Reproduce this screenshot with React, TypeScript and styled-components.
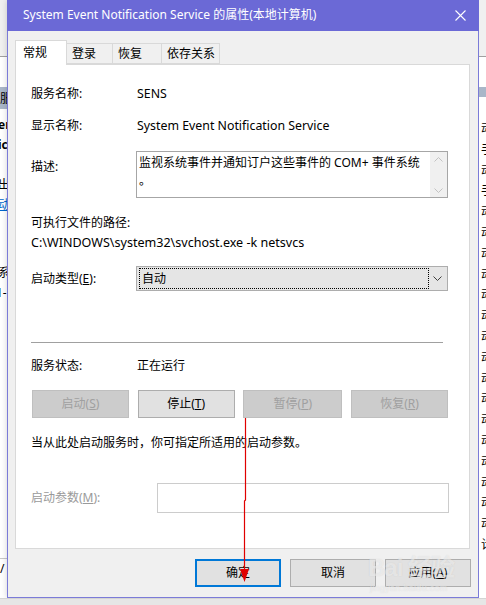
import React from "react";
import styled, { createGlobalStyle } from "styled-components";

const Global = createGlobalStyle`
  html, body { margin: 0; padding: 0; overflow: hidden; background: #ffffff; }
  * { box-sizing: border-box; }
  body { font-family: "Noto Sans", "Noto Sans CJK SC", sans-serif; font-size: 12px; color: #000; }
`;

const FONT = `"Noto Sans", "Noto Sans CJK SC", sans-serif`;

const Root = styled.div`
  position: relative;
  width: 486px;
  height: 605px;
  display: grid;
  grid-template-columns: 7px 472px 7px;
  grid-template-rows: 598px 7px;
  background: #ffffff;
  overflow: hidden;
`;

/* ---------- background windows ---------- */
const Side = styled.div`
  display: flex;
  flex-direction: column;
  overflow: hidden;
  background: #ffffff;
`;
const SideTop = styled.div`
  height: 57px;
  background: #f0f0f0;
  border-bottom: 1px solid #a0a0a0;
  flex: none;
`;
const SideGap = styled.div<{ h: number; bg?: string }>`
  height: ${(p) => p.h}px;
  background: ${(p) => p.bg || "#ffffff"};
  flex: none;
`;
const SideHeader = styled.div<{ h?: number }>`
  height: ${(p) => p.h ?? 22}px;
  background: #a9b6c8;
  flex: none;
  font-family: "Noto Sans CJK SC", sans-serif;
  font-size: 12px;
  line-height: 22px;
  white-space: nowrap;
`;
const SideText = styled.div<{ bold?: boolean; link?: boolean; left?: number }>`
  height: 20px;
  line-height: 20px;
  flex: none;
  white-space: nowrap;
  font-family: ${FONT};
  font-size: 12px;
  font-weight: ${(p) => (p.bold ? 700 : 400)};
  color: ${(p) => (p.link ? "#0066cc" : "#000")};
  text-decoration: ${(p) => (p.link ? "underline" : "none")};
  margin-left: ${(p) => p.left ?? 0}px;
`;
const RightText = styled(SideText)`
  height: 20.8px;
  line-height: 20.8px;
  margin-left: 2px;
`;
const Bottom = styled.div`
  grid-column: 1 / 4;
  background: #e6e6e6;
  border-top: 1px solid #d4d4d4;
`;

/* ---------- dialog ---------- */
const Dialog = styled.div`
  display: flex;
  flex-direction: column;
  background: #f0f0f0;
  border: 1px solid #7b7bd8;
  border-top: none;
  box-shadow: 0 0 6px rgba(0, 0, 0, 0.18);
`;
const TitleBar = styled.div`
  height: 31px;
  flex: none;
  margin: 0 -1px;
  background: #6b69d6;
  color: #ffffff;
  display: flex;
  align-items: center;
  justify-content: space-between;
  padding: 0 13px 0 16px;
  font-family: ${FONT};
  font-size: 12px;
`;
const TitleText = styled.span`
  line-height: 16px;
  margin-top: -1px;
`;
const Body = styled.div`
  display: flex;
  flex-direction: column;
  padding: 9px 7px 0 7px;
  flex: 1;
`;
const TabStrip = styled.div`
  display: flex;
  align-items: flex-end;
  height: 24px;
  position: relative;
  z-index: 2;
`;
const Tab = styled.div<{ active?: boolean; w: number }>`
  width: ${(p) => p.w}px;
  height: ${(p) => (p.active ? 25 : 21)}px;
  margin-bottom: ${(p) => (p.active ? -1 : 0)}px;
  margin-right: -1px;
  background: ${(p) => (p.active ? "#ffffff" : "#f0f0f0")};
  border: 1px solid #d9d9d9;
  border-bottom: ${(p) => (p.active ? "none" : "1px solid #d9d9d9")};
  padding-left: ${(p) => (p.active ? 7 : 5)}px;
  line-height: ${(p) => (p.active ? 23 : 20)}px;
  font-family: ${FONT};
  font-size: 12px;
  white-space: nowrap;
  position: relative;
  z-index: ${(p) => (p.active ? 2 : 1)};
`;
const Panel = styled.div`
  height: 485px;
  background: #ffffff;
  border: 1px solid #d9d9d9;
  margin-right: 1px;
  padding: 0 20px 0 15px;
  display: flex;
  flex-direction: column;
`;
const Row = styled.div<{ mt: number; col?: number; align?: string }>`
  display: grid;
  grid-template-columns: ${(p) => p.col ?? 105}px 1fr;
  align-items: ${(p) => p.align || "center"};
  margin-top: ${(p) => p.mt}px;
`;
const Label = styled.div<{ disabled?: boolean; mt?: number }>`
  line-height: 16px;
  white-space: nowrap;
  color: ${(p) => (p.disabled ? "#9a9a9a" : "#000")};
  margin-top: ${(p) => p.mt ?? 0}px;
`;
const Value = styled.div<{ latin?: boolean }>`
  line-height: 16px;
  padding-left: 1px;
  white-space: nowrap;
  font-size: ${(p) => (p.latin ? 12.35 : 12)}px;
`;
const Line = styled.div<{ mt: number; latin?: boolean }>`
  line-height: 16px;
  margin-top: ${(p) => p.mt}px;
  white-space: nowrap;
  font-size: ${(p) => (p.latin ? 12.55 : 12)}px;
`;
const DescBox = styled.div`
  width: 312px;
  height: 47px;
  border: 1px solid #a6a6a6;
  display: flex;
  background: #fff;
`;
const DescText = styled.div`
  flex: 1;
  padding: 2px 0 0 2px;
  line-height: 18px;
  white-space: pre-wrap;
`;
const ScrollBar = styled.div`
  width: 17px;
  background: #f0f0f0;
  display: flex;
  flex-direction: column;
  justify-content: space-between;
  align-items: center;
  padding: 5px 0 4px;
`;
const Select = styled.div`
  width: 312px;
  height: 25px;
  background: #e5e5e5;
  border: 1px solid #adadad;
  display: flex;
  align-items: center;
  padding: 1px 2px;
`;
const SelectFocus = styled.div`
  width: 290px;
  height: 21px;
  border: 1px dotted #000;
  line-height: 19px;
  padding-left: 2px;
`;
const SelectArrow = styled.div`
  flex: 1;
  display: flex;
  justify-content: center;
`;
const Separator = styled.div<{ mt: number }>`
  margin-top: ${(p) => p.mt}px;
  height: 1px;
  width: 412px;
  background: #a0a0a0;
`;
const ButtonRow = styled.div<{ mt: number }>`
  margin-top: ${(p) => p.mt}px;
  margin-left: 1px;
  width: 416px;
  display: flex;
  justify-content: space-between;
`;
const Btn = styled.div<{ disabled?: boolean; w: number; primary?: boolean }>`
  width: ${(p) => p.w}px;
  height: 28px;
  display: flex;
  align-items: center;
  justify-content: center;
  background: ${(p) => (p.disabled ? "#cccccc" : "#e1e1e1")};
  border: ${(p) => (p.primary ? "2px solid #0078d7" : p.disabled ? "1px solid #bfbfbf" : "1px solid #adadad")};
  color: ${(p) => (p.disabled ? "#a0a0a0" : "#000")};
  font-family: ${FONT};
  font-size: 12px;
  line-height: 16px;
  white-space: nowrap;
`;
const U = styled.span`
  text-decoration: underline;
  text-underline-offset: 1px;
`;
const ParamInput = styled.div`
  width: 292px;
  height: 30px;
  border: 1px solid #cccccc;
  background: #ffffff;
`;
const Footer = styled.div`
  display: flex;
  justify-content: flex-end;
  gap: 9px;
  margin-top: 10px;
`;

/* ---------- overlays ---------- */
const Overlay = styled.svg`
  position: absolute;
  left: 0;
  top: 0;
  pointer-events: none;
`;
const Watermark = styled.div`
  position: absolute;
  left: 368px;
  top: 553px;
  pointer-events: none;
  display: flex;
  flex-direction: column;
  align-items: flex-start;
  color: rgba(255, 255, 255, 0.5);
  text-shadow: 0 0 1px rgba(130, 130, 130, 0.25);
  font-family: "Liberation Sans", "Noto Sans CJK SC", sans-serif;
`;
const WmMain = styled.div`
  font-size: 24px;
  font-weight: 700;
  line-height: 30px;
  letter-spacing: -1px;
`;
const WmSub = styled.div`
  font-size: 9px;
  line-height: 11px;
  margin-left: 2px;
  letter-spacing: 0.3px;
`;

const Chevron = ({ up, color }: { up?: boolean; color: string }) => (
  <svg width="9" height="5" viewBox="0 0 9 5">
    <polyline
      points={up ? "0.5,4.5 4.5,0.5 8.5,4.5" : "0.5,0.5 4.5,4.5 8.5,0.5"}
      fill="none"
      stroke={color}
      strokeWidth="1"
    />
  </svg>
);

const leftRows: { t: string; bold?: boolean; link?: boolean }[] = [
  { t: "er", bold: true },
  { t: "ic", bold: true },
  { t: "" },
  { t: "出" },
  { t: "动", link: true },
];

const rightChars = ["动", "手", "动", "手", "动", "动", "动", "动", "动", "动", "动", "动", "动", "动", "动", "动", "动", "动", "动", "动", "计"];

export default function App() {
  return (
    <>
      <Global />
      <Root>
        <Side>
          <SideTop />
          <SideGap h={30} />
          <SideHeader>服</SideHeader>
          <SideGap h={6} />
          {leftRows.map((r, i) => (
            <SideText key={i} bold={r.bold} link={r.link} left={-2}>
              {r.t}
            </SideText>
          ))}
          <SideGap h={48} />
          <SideText left={-2}>系</SideText>
          <SideText left={-4}>1-</SideText>
          <SideGap h={255} />
          <SideGap h={1} bg="#c8c8c8" />
          <SideText left={0}>/</SideText>
        </Side>

        <Dialog>
          <TitleBar>
            <TitleText>System Event Notification Service 的属性(本地计算机)</TitleText>
            <svg width="11" height="11" viewBox="0 0 11 11">
              <path d="M0.5 0.5 L10.5 10.5 M10.5 0.5 L0.5 10.5" stroke="#fff" strokeWidth="1.1" />
            </svg>
          </TitleBar>
          <Body>
            <TabStrip>
              <Tab active w={52}>常规</Tab>
              <Tab w={47}>登录</Tab>
              <Tab w={50}>恢复</Tab>
              <Tab w={59}>依存关系</Tab>
            </TabStrip>
            <Panel>
              <Row mt={21}>
                <Label>服务名称:</Label>
                <Value latin>SENS</Value>
              </Row>
              <Row mt={16}>
                <Label>显示名称:</Label>
                <Value latin>System Event Notification Service</Value>
              </Row>
              <Row mt={17} align="start">
                <Label mt={8}>描述:</Label>
                <DescBox>
                  <DescText>{"监视系统事件并通知订户这些事件的 COM+ 事件系统\n。"}</DescText>
                  <ScrollBar>
                    <Chevron up color="#c2c2c2" />
                    <Chevron color="#c2c2c2" />
                  </ScrollBar>
                </DescBox>
              </Row>
              <Line mt={17}>可执行文件的路径:</Line>
              <Line mt={4} latin>C:\WINDOWS\system32\svchost.exe -k netsvcs</Line>
              <Row mt={15}>
                <Label>
                  启动类型(<U>E</U>):
                </Label>
                <Select>
                  <SelectFocus>自动</SelectFocus>
                  <SelectArrow>
                    <Chevron color="#404040" />
                  </SelectArrow>
                </Select>
              </Row>
              <Separator mt={51} />
              <Row mt={15}>
                <Label>服务状态:</Label>
                <Value>正在运行</Value>
              </Row>
              <ButtonRow mt={16}>
                <Btn disabled w={97}>
                  启动(<U>S</U>)
                </Btn>
                <Btn w={97}>
                  停止(<U>T</U>)
                </Btn>
                <Btn disabled w={99}>
                  暂停(<U>P</U>)
                </Btn>
                <Btn disabled w={97}>
                  恢复(<U>R</U>)
                </Btn>
              </ButtonRow>
              <Line mt={17}>当从此处启动服务时，你可指定所适用的启动参数。</Line>
              <Row mt={32} col={126}>
                <Label disabled>
                  启动参数(<U>M</U>):
                </Label>
                <ParamInput />
              </Row>
            </Panel>
            <Footer>
              <Btn primary w={86}>确定</Btn>
              <Btn w={86}>取消</Btn>
              <Btn w={86}>
                应用(<U>A</U>)
              </Btn>
            </Footer>
          </Body>
        </Dialog>

        <Side>
          <SideTop />
          <SideGap h={30} />
          <SideHeader h={10} />
          <SideGap h={22} />
          {rightChars.map((c, i) => (
            <RightText key={i}>{c}</RightText>
          ))}
        </Side>

        <Bottom />

        <Watermark>
          <WmMain>Bai 经验</WmMain>
          <WmSub>jingyan.baidu.com</WmSub>
        </Watermark>

        <Overlay width="486" height="605" viewBox="0 0 486 605">
          <polyline
            points="245.5,418 245.5,500 244.5,501 244.5,574"
            fill="none"
            stroke="#e00000"
            strokeWidth="1.2"
          />
          <polygon points="240,569 249,569 244.5,582" fill="#e00000" />
        </Overlay>
      </Root>
    </>
  );
}
